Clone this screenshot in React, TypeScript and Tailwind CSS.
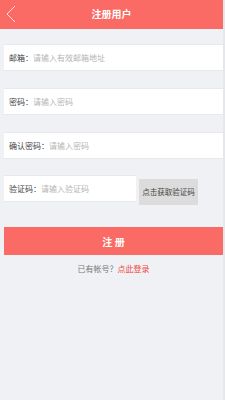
import React from 'react'

const font = { fontFamily: '"Noto Sans CJK SC", "Liberation Sans", sans-serif' }

function Field({ label, placeholder }: { label: string; placeholder: string }) {
  return (
    <div className="flex items-center h-[27px] bg-white pl-[5px] text-[8px] border-y border-[#e8e9ed]">
      <span className="text-[#444]">{label}</span>
      <span className="text-[#b5b5b5]">{placeholder}</span>
    </div>
  )
}

export default function App() {
  return (
    <div className="w-[225px] h-[400px] bg-[#f0f1f5] flex" style={font}>
      <div className="w-[223px] flex flex-col">
        {/* Header */}
        <div className="relative h-[29px] bg-[#f96b64] flex items-center justify-center">
          <svg className="absolute left-[5px] top-[5px]" width="12" height="18" viewBox="0 0 12 18">
            <path d="M10 1 L2 9 L10 17" fill="none" stroke="#fde0de" strokeWidth="1" />
          </svg>
          <span className="text-white text-[10px] font-bold -mt-[2px]">注册用户</span>
        </div>

        <div className="pl-[4px] flex flex-col">
          <div className="mt-[15px]">
            <Field label="邮箱：" placeholder="请输入有效邮箱地址" />
          </div>
          <div className="mt-[17px]">
            <Field label="密码：" placeholder="请输入密码" />
          </div>
          <div className="mt-[17px]">
            <Field label="确认密码：" placeholder="请输入密码" />
          </div>
          <div className="mt-[16px] flex items-start">
            <div className="w-[132px]">
              <Field label="验证码：" placeholder="请输入验证码" />
            </div>
            <button className="ml-[3px] mt-[4px] w-[59px] h-[26px] bg-[#dcdcdc] text-[#444] text-[7.5px] flex items-center justify-center whitespace-nowrap">
              点击获取验证码
            </button>
          </div>

          <button className="mt-[22px] h-[28px] bg-[#f96b64] text-white text-[10px] font-bold">
            注 册
          </button>

          <div className="mt-[8px] text-center text-[8px]">
            <span className="text-[#777]">已有帐号？</span>
            <span className="text-[#f04a44]">点此登录</span>
          </div>
        </div>
      </div>
      <div className="w-[2px] bg-[#e6e7eb]" />
    </div>
  )
}
